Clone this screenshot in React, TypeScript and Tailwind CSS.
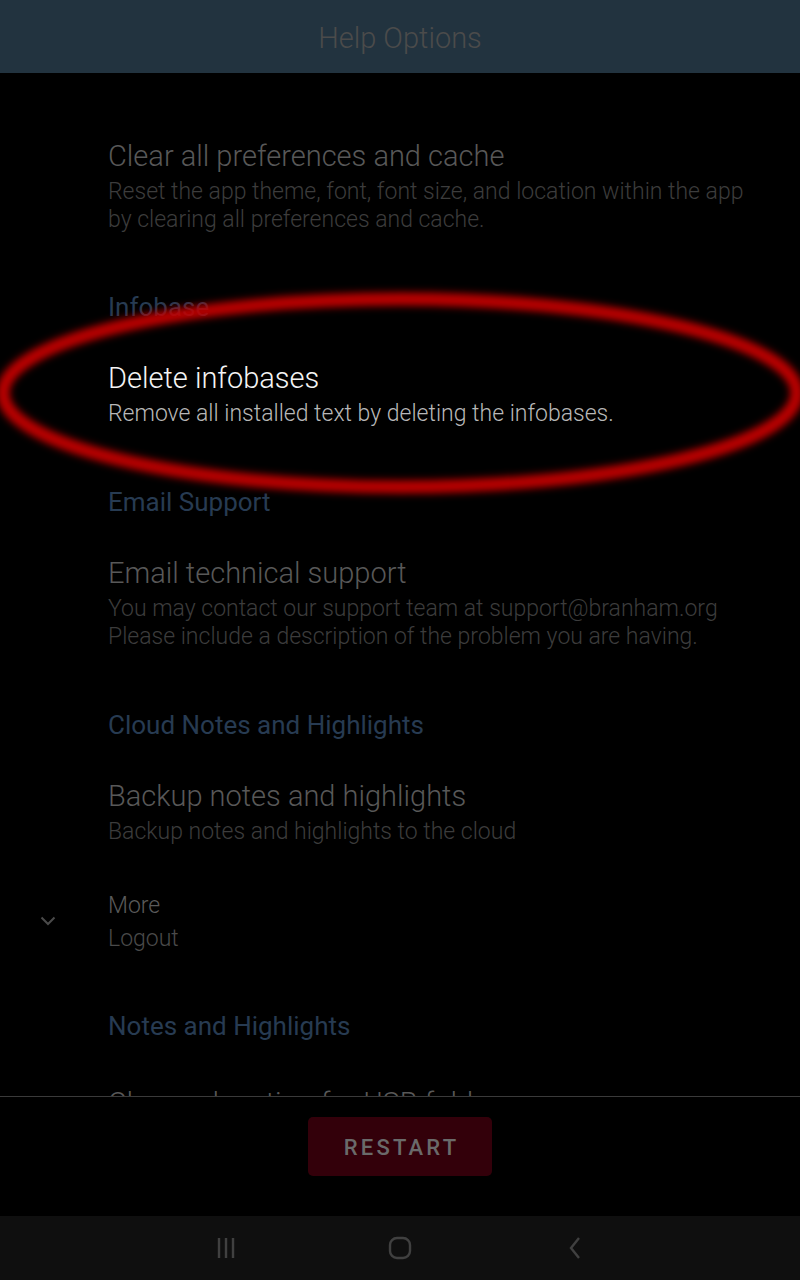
import React from "react";

const font = { fontFamily: "Roboto, 'Noto Sans', sans-serif" };

function Item({ title, sub, bright }: { title: string; sub: string[]; bright?: boolean }) {
  return (
    <div>
      <div className={`text-[29px] leading-[36px] font-light ${bright ? "text-[#f4f4f4]" : "text-[#585858]"}`}>{title}</div>
      <div className={`mt-[4px] text-[23px] leading-[28px] font-light ${bright ? "text-[#b8b8b8]" : "text-[#3c3c3c]"}`}>
        {sub.map((s, i) => (
          <div key={i}>{s}</div>
        ))}
      </div>
    </div>
  );
}

function Section({ label }: { label: string }) {
  return <div className="text-[26px] leading-[32px] font-normal text-[#273b52]">{label}</div>;
}

export default function App() {
  return (
    <div className="relative w-[800px] h-[1280px] bg-black flex flex-col overflow-hidden" style={font}>
      <div className="h-[73px] bg-[#22333f] flex items-center justify-center shrink-0 pt-[3px]">
        <span className="text-[29px] font-light text-[#4b4b4b] leading-none">Help Options</span>
      </div>
      <div className="flex-1 overflow-hidden pl-[108px] pr-[30px] pt-[65px] relative">
        <Item title="Clear all preferences and cache" sub={["Reset the app theme, font, font size, and location within the app", "by clearing all preferences and cache."]} />
        <div className="mt-[57px]"><Section label="Infobase" /></div>
        <div className="mt-[37px]"><Item bright title="Delete infobases" sub={["Remove all installed text by deleting the infobases."]} /></div>
        <div className="mt-[58px]"><Section label="Email Support" /></div>
        <div className="mt-[37px]"><Item title="Email technical support" sub={["You may contact our support team at support@branham.org", "Please include a description of the problem you are having."]} /></div>
        <div className="mt-[58px]"><Section label="Cloud Notes and Highlights" /></div>
        <div className="mt-[37px]"><Item title="Backup notes and highlights" sub={["Backup notes and highlights to the cloud"]} /></div>
        <div className="mt-[46px] relative">
          <svg className="absolute left-[-68px] top-[24px]" width="16" height="10" viewBox="0 0 16 10" fill="none">
            <path d="M1.5 1.5 L8 8 L14.5 1.5" stroke="#4a4a4a" strokeWidth="2" />
          </svg>
          <div className="text-[23px] leading-[28px] font-light text-[#5a5a5a]">More</div>
          <div className="mt-[5px] text-[23px] leading-[28px] font-light text-[#4a4a4a]">Logout</div>
        </div>
        <div className="mt-[57px]"><Section label="Notes and Highlights" /></div>
        <div className="mt-[43px] text-[29px] leading-[36px] font-light text-[#585858]">Change location for USB folder</div>
      </div>
      <div className="h-[120px] shrink-0 border-t border-[#3a3a3a] flex justify-center pt-[20px]">
        <div className="w-[184px] h-[59px] rounded-[5px] bg-[#33000a] flex items-center justify-center pt-[2px]">
          <span className="text-[22px] font-medium tracking-[3.2px] text-[#6a6a6a] pl-[3px]">RESTART</span>
        </div>
      </div>
      <div className="h-[64px] shrink-0 bg-[#0f0f0f] flex items-center justify-center">
        <div className="w-[373px] flex items-center justify-between">
          <svg width="24" height="24" viewBox="0 0 24 24" fill="none">
            <path d="M5 2 V22 M12 2 V22 M19 2 V22" stroke="#404040" strokeWidth="2.4" />
          </svg>
          <svg width="26" height="26" viewBox="0 0 26 26" fill="none">
            <rect x="3" y="3" width="20" height="20" rx="7" stroke="#404040" strokeWidth="2.4" />
          </svg>
          <svg width="24" height="24" viewBox="0 0 24 24" fill="none">
            <path d="M16 2 L8 12 L16 22" stroke="#404040" strokeWidth="2.4" />
          </svg>
        </div>
      </div>
      <svg className="absolute left-0 top-0 pointer-events-none" width="800" height="1280" viewBox="0 0 800 1280">
        <defs>
          <filter id="glow" x="-20%" y="-50%" width="140%" height="200%">
            <feGaussianBlur stdDeviation="4.5" />
          </filter>
        </defs>
        <ellipse cx="400" cy="393" rx="397" ry="94" fill="none" stroke="#c00000" strokeWidth="12" filter="url(#glow)" />
        <ellipse cx="400" cy="393" rx="397" ry="94" fill="none" stroke="#d80000" strokeWidth="3" filter="url(#glow)" opacity="0.7" />
      </svg>
    </div>
  );
}
